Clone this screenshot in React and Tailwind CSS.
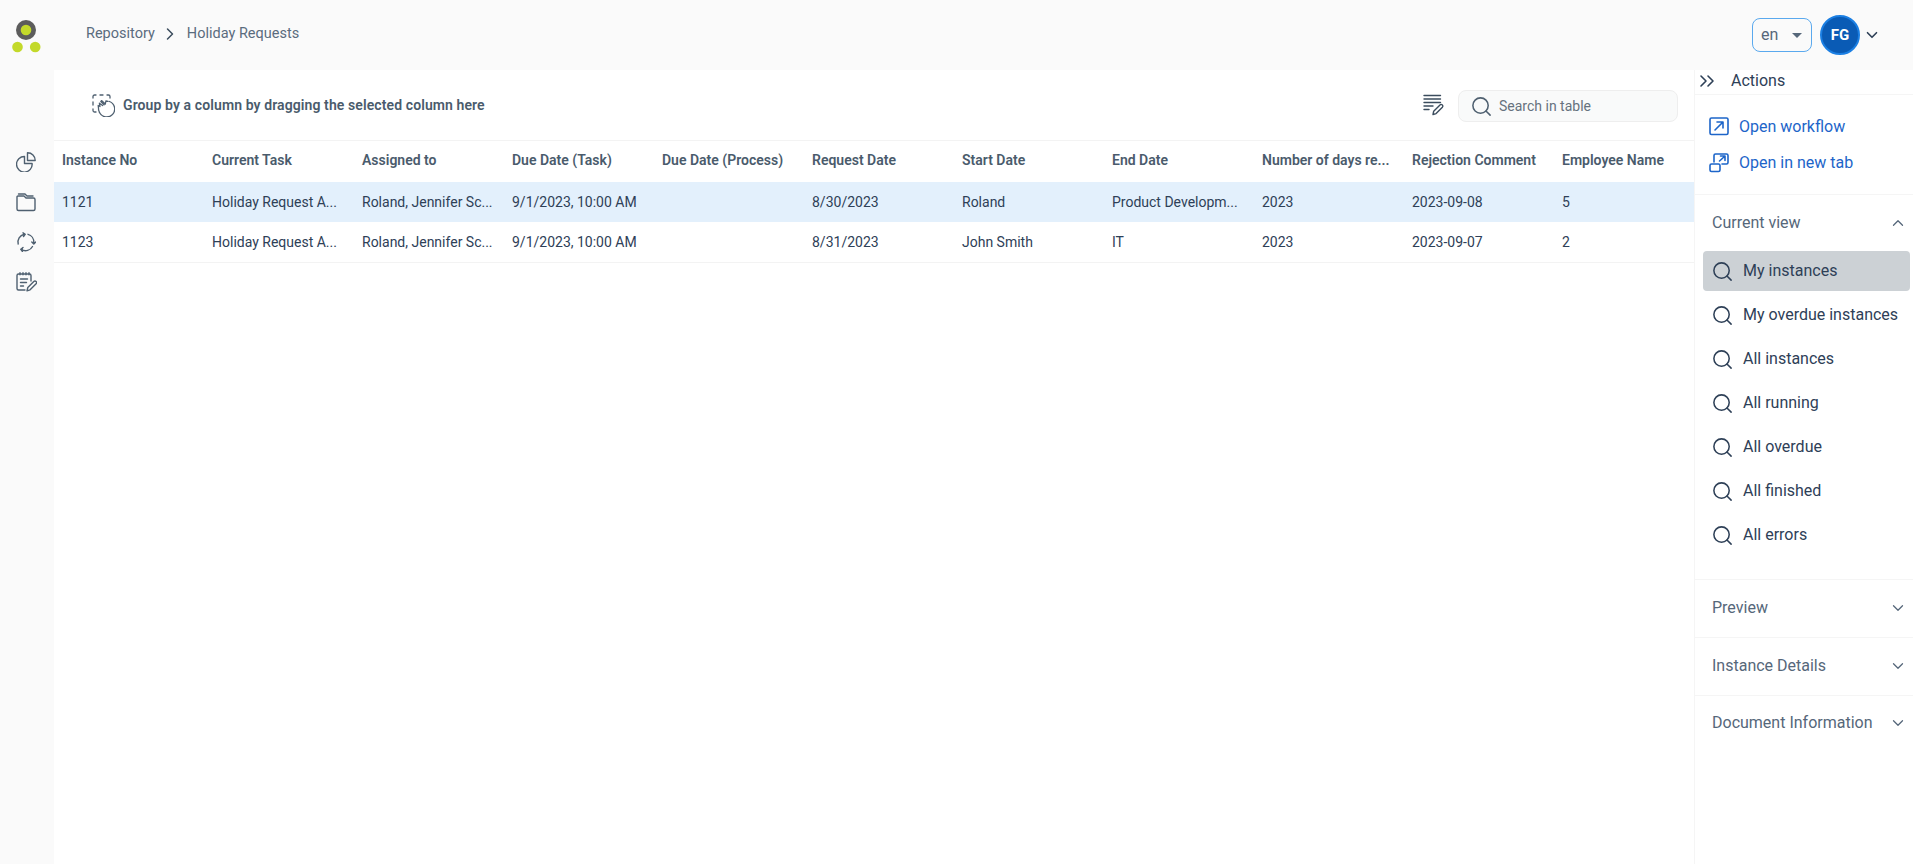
import { ChevronDown, ChevronRight, ChevronUp, ChevronsRight, Search } from 'lucide-react';

const columns = [
  'Instance No',
  'Current Task',
  'Assigned to',
  'Due Date (Task)',
  'Due Date (Process)',
  'Request Date',
  'Start Date',
  'End Date',
  'Number of days re...',
  'Rejection Comment',
  'Employee Name',
];

const rows = [
  ['1121', 'Holiday Request A...', 'Roland, Jennifer Sc...', '9/1/2023, 10:00 AM', '', '8/30/2023', 'Roland', 'Product Developm...', '2023', '2023-09-08', '5'],
  ['1123', 'Holiday Request A...', 'Roland, Jennifer Sc...', '9/1/2023, 10:00 AM', '', '8/31/2023', 'John Smith', 'IT', '2023', '2023-09-07', '2'],
];

const views = ['My instances', 'My overdue instances', 'All instances', 'All running', 'All overdue', 'All finished', 'All errors'];

function PieIcon() {
  return (
    <svg width="20" height="20" viewBox="0 0 20 20" fill="none" stroke="#4f6070" strokeWidth="1.4" strokeLinejoin="round">
      <path d="M8.500 4.500a7.800 7.800 0 1 0 7.600 7H8.500z" />
      <path d="M11.500 .8a7.600 7.600 0 0 1 7.700 7.700h-7.700z" />
    </svg>
  );
}

function FolderIcon() {
  return (
    <svg width="20" height="20" viewBox="0 0 20 20" fill="none" stroke="#4f6070" strokeWidth="1.4" strokeLinejoin="round" strokeLinecap="round">
      <path d="M1 5V17a1.500 1.500 0 0 0 1.500 1.500h15A1.500 1.500 0 0 0 19 17V7.500A1.500 1.500 0 0 0 17.500 6H10L8 4H2a1 1 0 0 0-1 1z" />
      <path d="M2.500 2H9l2 2h6" />
    </svg>
  );
}

function CycleIcon() {
  return (
    <svg width="20" height="20" viewBox="0 0 20 20" fill="none" stroke="#4f6070" strokeWidth="1.4" strokeLinejoin="round" strokeLinecap="round">
      <path d="M2.200 12a8 8 0 0 1 6-9.800" />
      <path d="M12 2.300a8 8 0 0 1 5.800 8" />
      <path d="M16.500 14.500a8 8 0 0 1-11 3.200" />
      <path d="M7 .8l2.200 1.500L7.500 4.500" fill="#4f6070" />
      <path d="M15.800 10l2 2 2-2" fill="#4f6070" />
      <path d="M7 15.500l-2.200 1.800L6.500 19.500" fill="#4f6070" />
    </svg>
  );
}

function NotesIcon() {
  return (
    <svg width="21" height="20" viewBox="0 0 21 20" fill="none" stroke="#4f6070" strokeWidth="1.4" strokeLinejoin="round" strokeLinecap="round">
      <path d="M15 9V3.500A1.500 1.500 0 0 0 13.500 2h-11A1.500 1.500 0 0 0 1 3.500v13A1.500 1.500 0 0 0 2.500 18H9" />
      <path d="M4 .8v2M7 .8v2M10 .8v2M13 .8v2" />
      <path d="M4.500 7h7M4.500 10.500h6M4.500 14h3" />
      <path d="M11 18.800l.8-3.300 6-6a1.600 1.600 0 0 1 2.300 2.300l-6 6z" />
    </svg>
  );
}

function GroupIcon() {
  return (
    <svg width="23" height="23" viewBox="0 0 23 23" fill="none" stroke="#4f6070" strokeWidth="1.3" strokeLinecap="round" strokeLinejoin="round" className="shrink-0">
      <path d="M1 4V2.500A1.500 1.500 0 0 1 2.500 1H4M8 1h3M15 1h1.500A1.500 1.500 0 0 1 18 2.500V4M1 8v3M1 15v1.500A1.500 1.500 0 0 0 2.500 18H4" />
      <path d="M17.500 7.500a8 8 0 1 1-10 11" />
      <path d="M7.500 18.500c-.8-1.500-1.200-2.800-1-4.300M6.500 14.200l-.3-2.700 1.800 1M8 12.500l-.6-3.300M7.400 9.200l3.200 2.300M8.800 7.600l3.300 3.200M8.800 7.600l.7-1 3.800 3.500M13.300 10.100l.6-3.100 2.200.3" />
    </svg>
  );
}

function ListEditIcon() {
  return (
    <svg width="22" height="22" viewBox="0 0 22 22" fill="none" stroke="#3b4c5d" strokeWidth="1.4" strokeLinecap="round" strokeLinejoin="round" className="shrink-0">
      <path d="M1 1.500h16.500M1 5h16.500M1 8.500h16.500M1 12h9M1 15.500h5" />
      <path d="M10 20.500l.7-3.300 6.300-6.300a1.700 1.700 0 0 1 2.400 2.400l-6.300 6.300z" />
    </svg>
  );
}

function OpenIcon() {
  return (
    <svg width="20" height="20" viewBox="0 0 20 20" fill="none" stroke="#1d65c9" strokeWidth="1.6" strokeLinecap="round" strokeLinejoin="round" className="shrink-0">
      <rect x="1" y="1" width="18" height="16.500" rx="1.500" />
      <path d="M6 13l7.500-7.500M8 5h6v6" />
    </svg>
  );
}

function NewTabIcon() {
  return (
    <svg width="20" height="20" viewBox="0 0 20 20" fill="none" stroke="#1d65c9" strokeWidth="1.6" strokeLinecap="round" strokeLinejoin="round" className="shrink-0">
      <path d="M5 9V2.500A1.500 1.500 0 0 1 6.500 1h11A1.500 1.500 0 0 1 19 2.500v7a1.500 1.500 0 0 1-1.500 1.500H13" />
      <rect x="1" y="11" width="10" height="7.500" rx="1.500" />
      <path d="M10.500 8l5-4.500M11.500 3h4.500v4.500" />
    </svg>
  );
}

function Logo() {
  return (
    <svg width="30" height="34" viewBox="0 0 30 34" className="shrink-0">
      <circle cx="15" cy="11" r="10" fill="#5c5c5c" />
      <circle cx="15" cy="11" r="5.300" fill="#c3d92a" />
      <circle cx="6.500" cy="28" r="5.300" fill="#c3d92a" />
      <circle cx="24.200" cy="28" r="5.300" fill="#c3d92a" />
    </svg>
  );
}

function AccordionRow({ title }) {
  return (
    <div className="flex items-center justify-between h-[58px] pl-[17px] pr-[6px] pb-[2px] border-b border-[#f5f5f5] text-[16px] text-[#56677a]">
      <span>{title}</span>
      <ChevronDown size={18} strokeWidth={1.7} className="text-[#56677a]" />
    </div>
  );
}

export default function App() {
  return (
    <div className="flex flex-col h-[864px] overflow-hidden bg-[#fafafa] font-['Roboto',sans-serif] text-[14px] text-[#2e4057]">
      {/* header */}
      <header className="flex items-center h-[70px] shrink-0">
        <div className="flex justify-center w-[52px] pt-[2px]">
          <Logo />
        </div>
        <nav className="flex items-center ml-[34px] text-[14.500px] text-[#5a6c7e] pb-[2px]">
          <span>Repository</span>
          <ChevronRight size={20} strokeWidth={1.8} className="ml-[5px] mr-[7px] text-[#3b4c5d]" />
          <span>Holiday Requests</span>
        </nav>
        <div className="flex items-center ml-auto pr-[32px]">
          <div className="flex items-center justify-between w-[60px] h-[34px] pl-[8px] pr-[9px] rounded-lg border border-[#5aa9ee] text-[16px] text-[#56677a]">
            en
            <span className="w-0 h-0 border-x-[5px] border-x-transparent border-t-[5px] border-t-[#56677a]" />
          </div>
          <div className="flex items-center justify-center w-[40px] h-[40px] ml-[8px] rounded-full bg-[#0a5bb5] border-2 border-[#1b7fe3] text-white font-bold text-[15px]">
            FG
          </div>
          <ChevronDown size={18} strokeWidth={2.2} className="ml-[3px] text-[#2e4057]" />
        </div>
      </header>

      <div className="flex flex-1 min-h-0">
        {/* left rail */}
        <aside className="flex flex-col items-center w-[54px] shrink-0 pt-[72px] pr-[2px]">
          {[<PieIcon key="pie" />, <FolderIcon key="folder" />, <CycleIcon key="cycle" />, <NotesIcon key="notes" />].map((icon, idx) => (
            <div key={idx} className="flex items-center justify-center h-[40px]">
              {icon}
            </div>
          ))}
        </aside>

        {/* table */}
        <main className="flex flex-col flex-1 min-w-0 bg-white overflow-hidden">
          <div className="flex items-center h-[71px] shrink-0 pl-[38px] pr-[16px] border-b border-[#f3f3f3]">
            <GroupIcon />
            <span className="ml-[8px] font-semibold tracking-[0.1px] text-[#4a5b6c]">Group by a column by dragging the selected column here</span>
            <div className="ml-auto mr-[13px]">
              <ListEditIcon />
            </div>
            <div className="flex items-center w-[220px] h-[32px] mt-[2px] pl-[11px] rounded-lg border border-[#eeeeee] bg-[#f9fafa] text-[#66727e]">
              <Search size={23} strokeWidth={1.6} className="shrink-0 text-[#4f6070]" />
              <span className="ml-[6px]">Search in table</span>
            </div>
          </div>

          <div className="flex h-[41px] shrink-0 items-center pb-[2px] font-semibold text-[#4a5b6c]">
            {columns.map((col) => (
              <div key={col} className="w-[150px] shrink-0 pl-[8px] whitespace-nowrap">{col}</div>
            ))}
          </div>
          {rows.map((row, idx) => (
            <div
              key={row[0]}
              className={idx === 0 ? 'flex items-center h-[40px] shrink-0 bg-[#e3f0fc]' : 'flex items-center h-[41px] shrink-0 border-b border-[#f3f3f3]'}
            >
              {row.map((cell, cidx) => (
                <div key={cidx} className="w-[150px] shrink-0 pl-[8px] whitespace-nowrap">{cell}</div>
              ))}
            </div>
          ))}
        </main>

        {/* right panel */}
        <aside className="flex flex-col w-[219px] shrink-0 bg-white border-l border-[#f5f5f5]">
          <div className="flex items-center h-[25px] shrink-0 pb-[2px] border-b border-[#f5f5f5] text-[16px]">
            <ChevronsRight size={24} strokeWidth={1.6} className="shrink-0 text-[#2e4057]" />
            <span className="ml-[12px]">Actions</span>
          </div>
          <div className="flex flex-col pt-[14px] pb-[13px] pl-[14px] border-b border-[#f5f5f5] text-[16px] text-[#1d65c9]">
            <div className="flex items-center h-[36px] gap-[10px]">
              <OpenIcon />
              Open workflow
            </div>
            <div className="flex items-center h-[36px] gap-[10px]">
              <NewTabIcon />
              Open in new tab
            </div>
          </div>
          <div className="flex items-center justify-between h-[55px] shrink-0 pl-[17px] pr-[6px] text-[16px] text-[#56677a]">
            <span>Current view</span>
            <ChevronUp size={18} strokeWidth={1.7} />
          </div>
          <div className="flex flex-col gap-[4px] mt-[1px] pl-[8px] pr-[3px] pb-[24px] border-b border-[#f5f5f5]">
            {views.map((view, idx) => (
              <div
                key={view}
                className={idx === 0 ? 'flex items-center h-[40px] pl-[8px] rounded bg-[#ccd1d5] text-[16px]' : 'flex items-center h-[40px] pl-[8px] rounded text-[16px]'}
              >
                <Search size={23} strokeWidth={1.6} className="shrink-0 text-[#2e4057]" />
                <span className="ml-[9px] whitespace-nowrap">{view}</span>
              </div>
            ))}
          </div>
          <AccordionRow title="Preview" />
          <AccordionRow title="Instance Details" />
          <div className="flex items-center justify-between h-[58px] pl-[17px] pr-[6px] pb-[4px] text-[16px] text-[#56677a]">
            <span>Document Information</span>
            <ChevronDown size={18} strokeWidth={1.7} />
          </div>
        </aside>
      </div>
    </div>
  );
}
